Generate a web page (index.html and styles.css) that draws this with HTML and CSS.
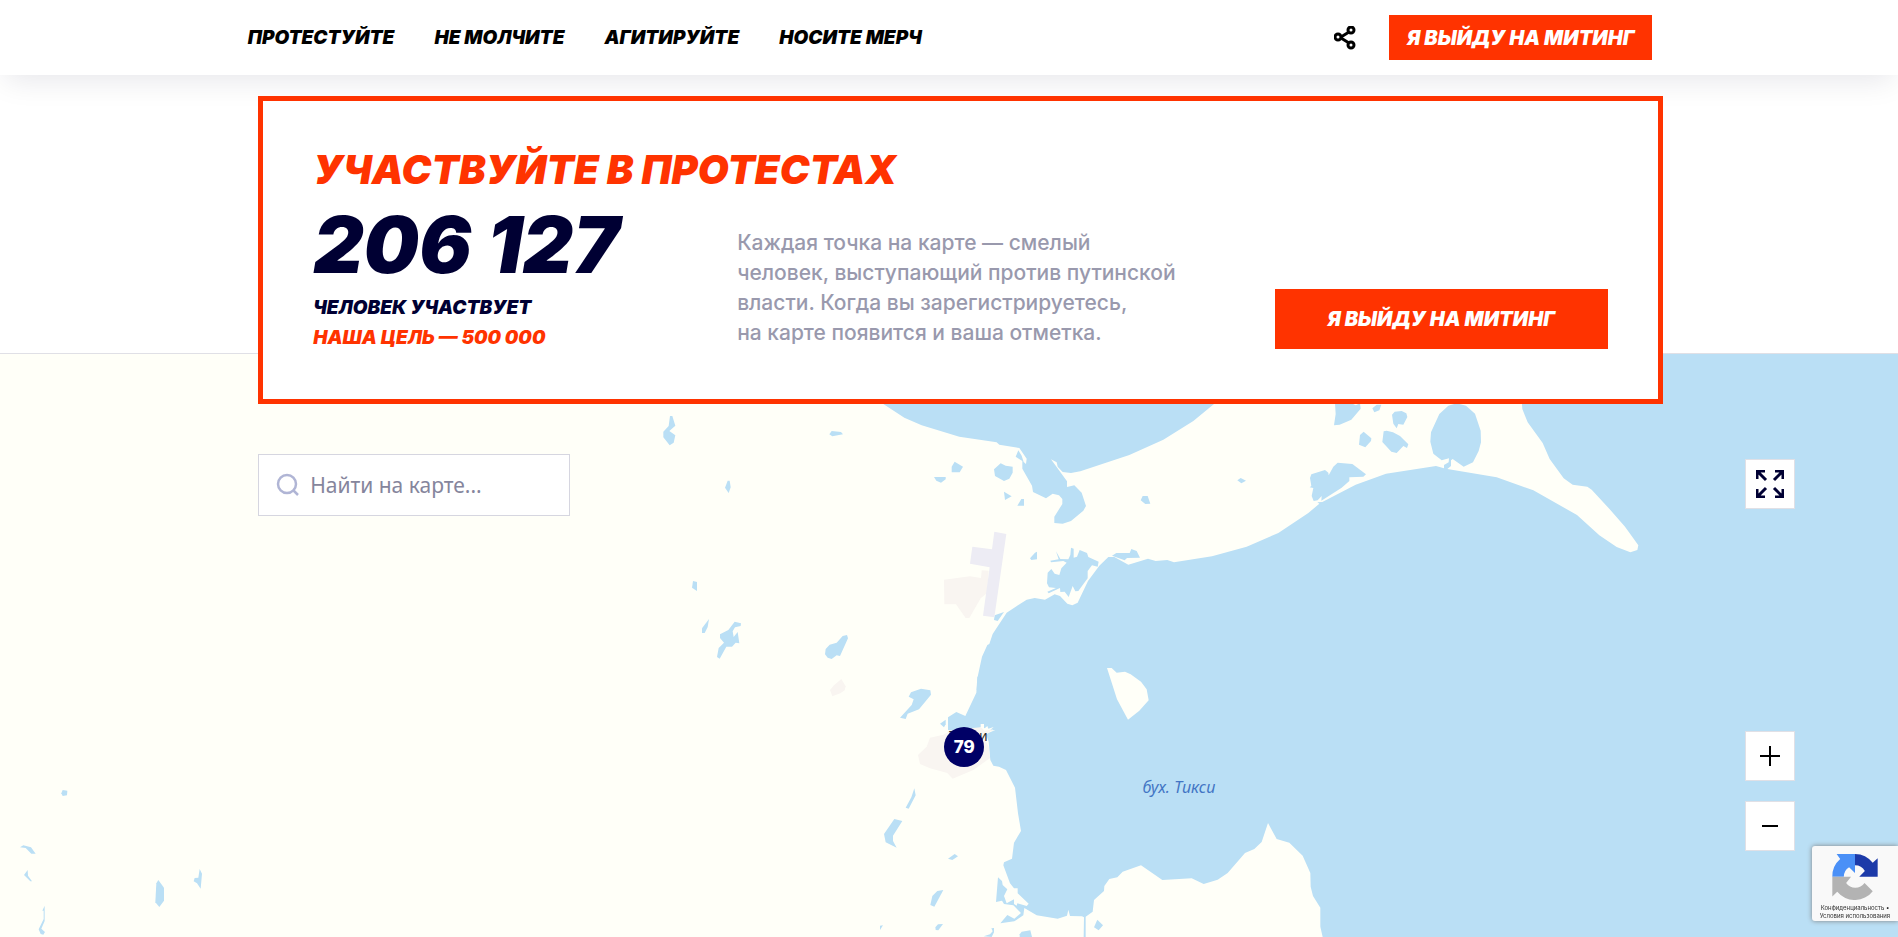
FILE: index.html
```html
<!DOCTYPE html>
<html lang="ru">
<head>
    <meta charset="UTF-8">
    <meta name="viewport" content="width=device-width, initial-scale=1.0">
    <title>Участвуйте в протестах</title>
    <link rel="stylesheet" href="styles.css">
</head>
<body>
    <header class="header">
        <nav class="nav">
            <a href="#protest">Протестуйте</a>
            <a href="#speak">Не молчите</a>
            <a href="#agitate">Агитируйте</a>
            <a href="#merch">Носите мерч</a>
        </nav>
        <button class="share" type="button" aria-label="Поделиться">
            <svg viewBox="0 0 22 24" width="22" height="24">
                <path d="M7 11L15 6M7 12L15 17" />
                <circle cx="4" cy="11" r="3" />
                <circle cx="17" cy="4" r="3" />
                <circle cx="17" cy="19" r="3" />
            </svg>
        </button>
        <button class="btn btn-header" type="button">Я выйду на митинг</button>
    </header>

    <main class="main">
        <section class="hero" id="protest">
            <h1 class="hero-title">Участвуйте в протестах</h1>
            <div class="hero-row">
                <div class="stats">
                    <div class="stats-number">206 127</div>
                    <div class="stats-label">Человек участвует</div>
                    <div class="stats-label stats-goal">Наша цель — 500 000</div>
                </div>
                <p class="hero-text">Каждая точка на карте — смелый<br>человек, выступающий против путинской<br>власти. Когда вы зарегистрируетесь,<br>на карте появится и ваша отметка.</p>
                <button class="btn btn-hero" type="button">Я выйду на митинг</button>
            </div>
        </section>

        <section class="map">
            <svg class="map-canvas" viewBox="-2580 -108 5694 1749" preserveAspectRatio="xMidYMid slice" aria-hidden="true">
                <!-- sea -->
                <g class="water">
                    <path d="M60 30L70 42L133 83L185 106L298 140L410 157L418 164L478 174L500 206L498 222L491 216L485 197L475 181L467 200L487 213L487 236L516 287L519 306L558 325L578 311L597 316L607 327L607 342L583 380L583 399L608 401L633 393L670 362L678 348L665 308L643 286L621 291L621 274L573 208L590 217L593 230L608 246L633 249L661 244L808 195L910 149L1000 93L1062 42L1075 30Z" />
                    <path d="M350 900L353 860L366 800L382 765L388 762L398 732L440 668L500 629L524 624L555 629L584 613L600 618L622 641L637 646L653 638L684 573L718 527L745 501L763 501L805 524L864 506L887 513L922 510L942 517L1056 499L1160 470L1255 429L1345 369L1378 341L1372 337L1387 336L1487 284L1578 251L1728 228L1752 235L1752 225L1766 217L1767 205L1745 211L1720 191L1711 155L1713 127L1738 72L1765 47L1790 40L1818 47L1845 71L1862 122L1863 157L1856 183L1839 217L1811 230L1778 207L1773 211L1773 228L1762 237L1910 262L2020 301L2151 375L2218 436L2270 471L2311 487L2332 480L2335 466L2295 410L2245 353L2195 299L2182 290L2138 284L2111 265L2069 207L2048 159L2003 97L1987 57L1985 30L1970 -108H3114V900Z" />
                </g>
                <g class="water" transform="translate(60 750)">
                    <path d="M611 891L612 832L606 829L570 828L565 809L561 827L533 836L470 826L433 804L430 826L403 844L361 850L382 825L403 836L423 819L400 796L372 792L366 782L348 786L354 712L366 723L368 735L382 748L372 768L380 790L402 778L402 792L410 797L412 790L440 798L446 791L413 760L413 745L402 745L390 730L370 676L372 667L396 656L402 608L423 573L414 520L405 443L378 390L357 380L340 377L331 360L326 305L318 282L346 270L330 271L341 261L325 266L322 258L316 263L312 265L312 252L302 252L302 262L290 268L250 275L204 270V232L229 216L256 228L289 158L292 110H3054V891H1328L1321 860V803L1299 768L1292 740L1291 699L1268 647L1228 608L1190 597L1164 549L1145 606L1123 627L1095 639L1043 699L1013 719L971 732L935 715L847 720L783 676L728 695L712 712L688 717L673 738L672 753L642 780L638 815L617 830V891Z" />
                    <path d="M180 251L197 239V253L192 262Z" />
                    <path d="M60 233L95 195L101 178L86 170L93 157L123 146L151 151L153 164L117 208L83 221L77 237Z" />
                    <path d="M103 445L107 466L86 506L77 503L94 472Z" />
                    <path d="M43 537L67 543L39 587V603L50 623L17 607L12 582Z" />
                    <path d="M204 656L224 642L234 649L217 660Z" />
                    <path d="M151 795L157 768L172 753L190 750L163 800Z" />
                    <path d="M166 862L174 853L189 852L175 871L167 870Z" />
                    <path d="M0 857L9 856L0 870Z" />
                    <path d="M311 889L330 883L338 874L334 865L342 864V877L335 891Z" />
                    <path d="M419 883L425 875L451 871L456 891H419Z" />
                    <path d="M642 862L652 839L669 856L656 871Z" />
                </g>
                <path class="land" d="M741 834L755 834L770 848L795 845L812 853L843 875L860 898L866 931L838 962L804 989L771 928Z" />

                <!-- lakes in the north -->
                <g class="water">
                    <path d="M284 215L309 230L299 247H275V230Z" />
                    <path d="M222 261H257V268L243 278L229 272Z" />
                    <path d="M402 238L422 220L437 227L458 230V248L448 266L432 273L405 258Z" />
                    <path d="M432 305L455 319L435 330Z" />
                    <path d="M484 327H492V347H472Z" />
                    <path d="M510 505L525 488L531 485V508L514 510Z" />
                    <path d="M402 690L404 676L432 666L413 693Z" />
                    <path d="M842 331L848 318H863L871 341L856 342Z" />
                    <path d="M1132 271L1142 264L1158 272L1144 280Z" />
                    <path d="M756 497L769 489H809L814 477L830 483L840 503L801 504L794 511Z" />
                    <path d="M633 473L641 476V503L651 500L659 480L681 489L685 501L716 515L713 530L696 526L683 543V565L655 603L646 604L638 588L626 621L614 605L601 606L600 594L566 610L562 605L588 594L567 592L561 580L563 548L574 537L584 551L598 555L604 535L620 518L610 513L573 517L571 512L596 508L588 484L601 507L625 508L631 495Z" />
                    <path d="M1425 40H1475L1487 46L1500 40L1502 56L1474 89L1439 104L1422 106L1427 72Z" />
                    <path d="M1537 55L1550 44H1564L1558 61L1543 67Z" />
                    <path d="M1596 74L1604 65L1625 63L1639 70L1642 81L1630 104L1615 102L1610 115L1600 101Z" />
                    <path d="M1500 135L1511 125L1534 145L1533 153L1516 172L1497 164Z" />
                    <path d="M1571 124L1580 122L1599 127L1620 138L1645 163L1641 174L1630 168L1610 189L1594 185L1567 156Z" />
                    <path d="M1350 264L1354 253L1395 240L1405 248L1406 256L1420 230L1433 218L1477 222L1518 253L1510 260L1468 262V273L1445 293L1384 332L1385 318L1373 331L1361 333L1355 318L1360 294L1349 292L1354 288Z" />
                </g>

                <!-- lakes in the west -->
                <g class="water" transform="translate(-660 30)">
                    <path d="M90 48H97L106 77L88 93L106 106L101 128L89 136L70 112V95L86 78Z" />
                    <path d="M568 103L575 93L603 96L609 103L577 109Z" />
                    <path d="M263 242H269L272 262L266 279L255 263Z" />
                    <path d="M159 543L171 546V573L156 563Z" />
                    <path d="M207 657L203 681L194 699H186V685Z" />
                    <path d="M240 703L265 690L284 665L303 670L302 678L285 682L278 694L281 711L293 696L298 730L287 728L276 740H259L239 776L231 771L236 744L252 728L240 714Z" />
                    <path d="M557 747L569 734L590 728L608 708L621 705L624 715L600 768L590 766L575 777L563 773L555 763Z" />
                </g>
                <g class="water" transform="translate(-2580 1050)">
                    <path d="M188 150L202 152L201 166L188 168L184 160Z" />
                    <path d="M60 322L70 316L93 322L107 341H94L77 324Z" />
                    <path d="M72 405L83 390L84 407L96 424L91 424Z" />
                    <path d="M127 512L134 497V543L124 566L135 576L130 584L122 582L116 568L131 537V512Z" />
                    <path d="M475 420L492 443V482L478 501L466 487L469 430Z" />
                    <path d="M599 387L606 401L602 446L591 430L581 424L584 414L595 413Z" />
                </g>

                <!-- built-up areas and the airfield -->
                <g class="town">
                    <path d="M252 569L330 559L363 564L365 541L386 542L381 609L362 625L328 684H317L288 643H253Z" />
                    <path d="M212 1083L330 1040L350 1030L366 1035L378 1055L386 1070L390 1104L340 1140L278 1166L262 1149L210 1135L180 1122L174 1095L200 1070L210 1043L250 1034L276 1020L362 1012L374 1022L400 1018L378 1034Z" />
                    <path d="M-56 867L-43 889L-46 901L-59 910L-83 919L-90 900L-78 886Z" />
                </g>
                <path class="airfield" d="M403 425L439 432L403 682L369 677L389 532L330 521L337 470L396 478Z" />
            </svg>

            <span class="map-label map-town">Тикси</span>
            <span class="map-label map-bay">бух. Тикси</span>
            <button class="marker" type="button">79</button>

            <form class="search">
                <svg viewBox="0 0 24 24" width="24" height="24" aria-hidden="true">
                    <circle cx="11" cy="11" r="9" />
                    <path d="M17 17L22 22" />
                </svg>
                <input type="text" placeholder="Найти на карте..." aria-label="Найти на карте">
            </form>

            <div class="controls">
                <button class="control control-full" type="button" aria-label="На весь экран">
                    <svg viewBox="0 0 28 28" width="28" height="28">
                        <path d="M1 9V1H9M1 1L10 10M19 1H27V9M27 1L18 10M1 19V27H9M1 27L10 18M19 27H27V19M27 27L18 18" />
                    </svg>
                </button>
                <button class="control" type="button" aria-label="Приблизить">
                    <svg viewBox="0 0 20 20" width="20" height="20">
                        <path d="M10 0V20M0 10H20" />
                    </svg>
                </button>
                <button class="control" type="button" aria-label="Отдалить">
                    <svg viewBox="0 0 20 20" width="20" height="20">
                        <path d="M2 10H18" />
                    </svg>
                </button>
            </div>
        </section>
    </main>

    <aside class="captcha">
        <svg viewBox="396 1272 138 140" width="46" height="46" aria-hidden="true">
            <path fill="#4a90f7" d="M396 1341A69 69 0 0 1 420 1287L409 1272H465V1330L447 1312A34 34 0 0 0 431 1341Z" />
            <path fill="#1c3aa9" d="M465 1272A69 69 0 0 1 519 1299L534 1285V1341H478L495 1324A34 34 0 0 0 465 1306Z" />
            <path fill="#b3b3b3" d="M396 1341H453L438 1360A34 34 0 0 0 494 1360L519 1385A69 69 0 0 1 411 1387L396 1401Z" />
        </svg>
        <div class="captcha-links">
            <a href="#privacy">Конфиденциальность</a> •<br>
            <a href="#terms">Условия использования</a>
        </div>
    </aside>
</body>
</html>
```

FILE: styles.css
```css
* {
    box-sizing: border-box;
}
body {
    margin: 0;
    min-height: 100vh;
    display: flex;
    flex-direction: column;
    overflow: hidden;
    font-family: Inter, sans-serif;
    background-color: #fff;
    color: #000033;
}
button {
    border: 0;
    padding: 0;
    cursor: pointer;
}

/* header */
.header {
    display: flex;
    align-items: center;
    padding: 15px 12.95% 15px 13.05%;
    background-color: #fff;
    box-shadow: 0 10px 30px -5px rgba(0, 0, 51, 0.1);
}
.nav {
    display: flex;
    gap: 40px;
    margin-right: auto;
}
.nav a {
    font: italic 900 19px/24px Inter, sans-serif;
    color: #000;
    text-decoration: none;
    text-transform: uppercase;
}
.share {
    display: flex;
    margin-right: 33px;
    background: none;
}
.share svg {
    fill: none;
    stroke: #000;
    stroke-width: 3;
}
.btn {
    font: italic 900 20px/24px Inter, sans-serif;
    text-transform: uppercase;
    color: #fff;
    background-color: #ff3300;
}
.btn-header {
    width: 263px;
    height: 45px;
}

/* hero */
.main {
    flex: 1;
    display: flex;
    flex-direction: column;
}
.hero {
    position: relative;
    z-index: 1;
    margin: 21px 12.4% -51px 13.6%;
    padding: 45px 50px 46px;
    border: 5px solid #ff3300;
    background-color: #fff;
}
.hero-title {
    margin: 0 0 16px;
    font: italic 900 40px/48px Inter, sans-serif;
    text-transform: uppercase;
    color: #ff3300;
}
.hero-row {
    display: flex;
    align-items: flex-end;
}
.stats {
    width: 424px;
}
.stats-number {
    margin-bottom: 13px;
    font: italic 900 78px/70px Inter, sans-serif;
}
.stats-label {
    font: italic 900 19px/30px Inter, sans-serif;
    text-transform: uppercase;
}
.stats-goal {
    color: #ff3300;
}
.hero-text {
    margin: 0 auto 5px 0;
    font-size: 21px;
    font-weight: 500;
    line-height: 30px;
    white-space: nowrap;
    color: #9999ad;
}
.btn-hero {
    width: 333px;
    height: 60px;
    margin-bottom: 4px;
}

/* map */
.map {
    position: relative;
    flex: 1;
    display: flex;
    align-items: flex-start;
    justify-content: space-between;
    padding: 100px 103px 86px 13.6%;
    border-top: 1px solid #e0e0e6;
    background-color: #fffff8;
}
.map-canvas {
    position: absolute;
    top: 0;
    left: 0;
    width: 100%;
    height: 100%;
}
.water {
    fill: #badff5;
}
.land {
    fill: #fffff8;
}
.town {
    fill: #f9f5f1;
}
.airfield {
    fill: #edecf4;
}
.map-label {
    position: absolute;
    font-family: "Noto Sans", sans-serif;
    line-height: 20px;
}
.map-town {
    top: 372px;
    left: 50%;
    font-size: 14px;
    color: #333;
}
.map-bay {
    top: 423px;
    left: 60.2%;
    font-size: 16px;
    font-style: italic;
    color: #4275c4;
}
.marker {
    position: absolute;
    top: 373px;
    left: 49.75%;
    width: 40px;
    height: 40px;
    border-radius: 50%;
    font: 800 17px/20px Inter, sans-serif;
    color: #fff;
    background-color: #000066;
}
.search {
    position: relative;
    display: flex;
    align-items: center;
    gap: 10px;
    width: 312px;
    height: 62px;
    padding: 0 17px;
    border: 1px solid #d6d6e0;
    background-color: #fff;
}
.search svg {
    flex: none;
    fill: none;
    stroke: #b0b5d5;
    stroke-width: 2.5;
}
.search input {
    width: 100%;
    border: 0;
    padding: 0;
    outline: none;
    background: none;
    font: 21px/30px "Noto Sans", sans-serif;
}
.search input::placeholder {
    color: #85859c;
}
.controls {
    position: relative;
    align-self: stretch;
    display: flex;
    flex-direction: column;
    gap: 20px;
    padding-top: 5px;
}
.control {
    display: flex;
    align-items: center;
    justify-content: center;
    width: 50px;
    height: 50px;
    border: 1px solid #e0e0e6;
    background-color: #fff;
}
.control svg {
    fill: none;
    stroke: #000;
    stroke-width: 2;
}
.control-full {
    margin-bottom: auto;
}
.control-full svg {
    stroke: #000033;
    stroke-width: 3;
}

/* captcha badge */
.captcha {
    position: fixed;
    right: 0;
    bottom: 16px;
    z-index: 2;
    width: 86px;
    height: 75px;
    padding-top: 8px;
    border-radius: 3px 0 0 3px;
    text-align: center;
    background-color: #f9f9f9;
    box-shadow: 0 0 5px gray;
}
.captcha svg {
    display: block;
    margin: 0 auto 4px;
}
.captcha-links {
    font: 6px/8px Inter, sans-serif;
    white-space: nowrap;
    color: #000;
}
.captcha-links a {
    color: #333;
    text-decoration: none;
}
```
